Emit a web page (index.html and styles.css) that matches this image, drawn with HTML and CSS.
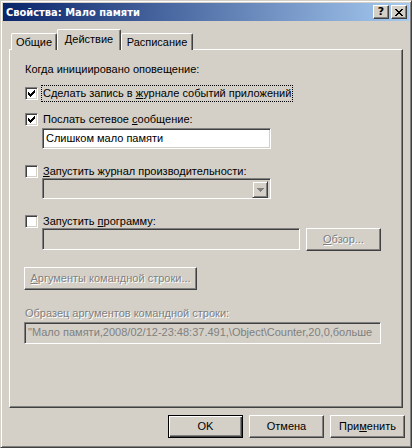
FILE: index.html
```html
<!DOCTYPE html>
<html lang="ru">
<head>
<meta charset="utf-8">
<title>Свойства: Мало памяти</title>
<link rel="stylesheet" href="styles.css">
</head>
<body>
<div class="window">
  <div class="titlebar">
    <span class="title">Свойства: Мало памяти</span>
    <div class="tbuttons">
      <span class="tbtn"><span class="q">?</span></span>
      <span class="tbtn"><svg width="8" height="7" viewBox="0 0 8 7" shape-rendering="crispEdges"><path d="M0 0h2v1h-2zM6 0h2v1h-2zM1 1h2v1h-2zM5 1h2v1h-2zM2 2h4v1h-4zM3 3h2v1h-2zM2 4h4v1h-4zM1 5h2v1h-2zM5 5h2v1h-2zM0 6h2v1h-2zM6 6h2v1h-2z" fill="#000"/></svg></span>
    </div>
  </div>

  <div class="tabs">
    <div class="tab">Общие</div>
    <div class="tab active">Действие</div>
    <div class="tab">Расписание</div>
  </div>

  <div class="panel">
    <div class="group-label">Когда инициировано оповещение:</div>

    <div class="cbrow r1">
      <span class="cb"><svg width="7" height="7" viewBox="0 0 7 7" shape-rendering="crispEdges"><path d="M0 2h1v3h-1zM1 3h1v3h-1zM2 4h1v3h-1zM3 3h1v3h-1zM4 2h1v3h-1zM5 1h1v3h-1zM6 0h1v3h-1z" fill="#000"/></svg></span>
      <span class="cblabel focus">Сделать запись в <u>ж</u>урнале событий приложений</span>
    </div>

    <div class="cbrow r2">
      <span class="cb"><svg width="7" height="7" viewBox="0 0 7 7" shape-rendering="crispEdges"><path d="M0 2h1v3h-1zM1 3h1v3h-1zM2 4h1v3h-1zM3 3h1v3h-1zM4 2h1v3h-1zM5 1h1v3h-1zM6 0h1v3h-1z" fill="#000"/></svg></span>
      <span class="cblabel">Послать сетевое <u>с</u>ообщение:</span>
    </div>
    <div class="field msg">Слишком мало памяти</div>

    <div class="cbrow r3">
      <span class="cb"></span>
      <span class="cblabel"><u>З</u>апустить журнал производительности:</span>
    </div>
    <div class="field combo">
      <span class="dropbtn"><svg width="7" height="4" viewBox="0 0 7 4" shape-rendering="crispEdges"><path d="M0 0h7v1h-1v1h-1v1h-1v1h-1v-1h-1v-1h-1v-1h-1z" fill="#808080"/></svg></span>
    </div>

    <div class="cbrow r4">
      <span class="cb"></span>
      <span class="cblabel">Запустить <u>п</u>рограмму:</span>
    </div>
    <div class="progrow">
      <div class="field prog"></div>
      <div class="btn disabled browse"><span><u>О</u>бзор...</span></div>
    </div>

    <div class="btn disabled args"><span><u>А</u>ргументы командной строки...</span></div>

    <div class="sample-label">Образец аргументов командной строки:</div>
    <div class="field sample">"Мало памяти,2008/02/12-23:48:37.491,\Object\Counter,20,0,больше</div>
  </div>

  <div class="actions">
    <div class="btn default">OK</div>
    <div class="btn">Отмена</div>
    <div class="btn">При<u>м</u>енить</div>
  </div>
</div>
</body>
</html>
```

FILE: styles.css
```css
* { box-sizing: border-box; }
html, body { margin: 0; padding: 0; background: #d4d0c8; }
body {
  font-family: "Liberation Sans", "DejaVu Sans Condensed", sans-serif;
  font-size: 11px;
  line-height: 13px;
  color: #000;
}
u { text-decoration: underline; text-underline-offset: 1px; }

.window {
  width: 412px;
  height: 448px;
  background: #d4d0c8;
  border: 1px solid;
  border-color: #d4d0c8 #404040 #404040 #d4d0c8;
  box-shadow: inset 1px 1px #fff, inset -1px -1px #808080;
  padding: 2px;
}

.titlebar {
  height: 18px;
  background: linear-gradient(to right, #0a246a, #a6caf0);
  display: flex;
  align-items: center;
  justify-content: space-between;
  padding: 0 2px 0 3px;
}
.title {
  font-family: "DejaVu Sans Condensed", "Liberation Sans", sans-serif;
  color: #fff;
  font-weight: bold;
  font-size: 11px;
}
.tbuttons { display: flex; gap: 2px; }
.tbtn {
  width: 16px;
  height: 14px;
  background: #d4d0c8;
  border: 1px solid;
  border-color: #fff #404040 #404040 #fff;
  box-shadow: inset -1px -1px #808080;
  display: flex;
  align-items: center;
  justify-content: center;
}
.tbtn .q {
  font-family: "DejaVu Sans", sans-serif;
  font-weight: bold;
  font-size: 11px;
  line-height: 12px;
}

.tabs {
  display: flex;
  align-items: flex-end;
  height: 21px;
  margin-top: 8px;
  padding-left: 8px;
}
.tab {
  height: 17px;
  background: #d4d0c8;
  border-top: 1px solid #fff;
  border-left: 1px solid #fff;
  border-right: 1px solid #404040;
  box-shadow: inset -1px 0 #808080;
  border-radius: 2px 2px 0 0;
  padding: 2px 0 0;
  text-align: center;
}
.tab:nth-child(1) { width: 46px; }
.tab:nth-child(3) { width: 72px; }
.tab.active {
  width: 64px;
  height: 21px;
  padding-top: 3px;
  position: relative;
  z-index: 1;
}

.panel {
  margin: -1px 0 0 6px;
  width: 394px;
  height: 359px;
  border: 1px solid;
  border-color: #fff #404040 #404040 #fff;
  box-shadow: inset -1px -1px #808080;
  padding: 0 0 0 15px;
}

.group-label { margin-top: 13px; }

.cbrow { display: flex; align-items: center; height: 13px; }
.r1 { margin-top: 11px; }
.r2 { margin-top: 13px; }
.r3 { margin-top: 16px; }
.r4 { margin-top: 16px; }

.cb {
  width: 13px;
  height: 13px;
  flex: none;
  background: #fff;
  border: 1px solid;
  border-color: #808080 #fff #fff #808080;
  box-shadow: inset 1px 1px #404040, inset -1px -1px #d4d0c8;
  display: flex;
  align-items: center;
  justify-content: center;
}
.cblabel {
  margin-left: 3px;
  padding: 1px 1px;
  border: 1px solid transparent;
  white-space: nowrap;
}
.cblabel.focus { border: 1px dotted #000; }

.field {
  border: 1px solid;
  border-color: #808080 #fff #fff #808080;
  box-shadow: inset 1px 1px #404040, inset -1px -1px #d4d0c8;
  background: #d4d0c8;
  white-space: nowrap;
  overflow: hidden;
}
.msg {
  margin: 2px 0 0 17px;
  width: 229px;
  height: 21px;
  background: #fff;
  padding: 3px 3px;
}
.combo {
  margin: 0 0 0 17px;
  width: 229px;
  height: 21px;
  display: flex;
  justify-content: flex-end;
  padding: 2px;
}
.dropbtn {
  width: 16px;
  height: 17px;
  border: 1px solid;
  border-color: #d4d0c8 #404040 #404040 #d4d0c8;
  box-shadow: inset 1px 1px #fff, inset -1px -1px #808080;
  display: flex;
  align-items: center;
  justify-content: center;
}

.progrow {
  display: flex;
  align-items: flex-start;
  gap: 6px;
  margin-left: 17px;
}
.prog { width: 258px; height: 22px; }

.btn {
  width: 75px;
  height: 23px;
  background: #d4d0c8;
  border: 1px solid;
  border-color: #fff #404040 #404040 #fff;
  box-shadow: inset -1px -1px #808080;
  display: flex;
  align-items: center;
  justify-content: center;
  white-space: nowrap;
}
.btn.default {
  border-color: #000;
  box-shadow: inset 1px 1px #fff, inset -1px -1px #404040, inset -2px -2px #808080;
}
.btn.disabled { color: #808080; text-shadow: 1px 1px 0 #fff; }
.args { width: 173px; margin: 16px 0 0 -1px; }

.sample-label {
  margin-top: 17px;
  color: #808080;
  text-shadow: 1px 1px 0 #fff;
}
.sample {
  margin: 2px 0 0 -1px;
  width: 357px;
  height: 22px;
  color: #808080;
  padding: 3px 3px;
}

.actions {
  display: flex;
  justify-content: flex-end;
  gap: 6px;
  margin-top: 7px;
  padding-right: 4px;
}
```
